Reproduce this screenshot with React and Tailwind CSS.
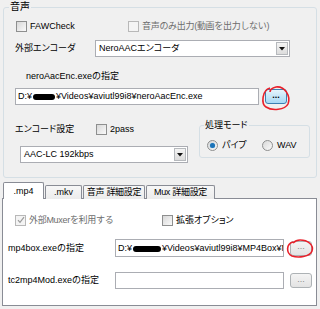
import React from "react";

const FONT = { fontFamily: '"Liberation Sans", "Noto Sans CJK JP", sans-serif' };

function Check({ checked, disabled }) {
  return (
    <span
      className={
        disabled
          ? "w-[11px] h-[11px] shrink-0 border border-[#b8b8b8] bg-[#f4f4f4] flex items-center justify-center"
          : "w-[11px] h-[11px] shrink-0 border border-[#8e8f8f] bg-gradient-to-br from-[#d8d8d8] to-[#fafafa] flex items-center justify-center"
      }
    >
      {checked ? (
        <svg width="8" height="8" viewBox="0 0 8 8">
          <path d="M1 4.2 L3 6.4 L7 1.2" stroke="#9a9a9a" strokeWidth="1.2" fill="none" />
        </svg>
      ) : null}
    </span>
  );
}

function Radio({ checked }) {
  return (
    <span className="w-[11px] h-[11px] shrink-0 rounded-full border border-[#8e8f8f] bg-gradient-to-br from-[#d8d8d8] to-[#fafafa] flex items-center justify-center">
      {checked ? <span className="w-[5px] h-[5px] rounded-full bg-[#1b73b8] shadow-[0_0_1px_#5fb0e8]" /> : null}
    </span>
  );
}

function Combo({ children, w }) {
  return (
    <div className={`${w} h-[17px] border border-[#abadb3] bg-white flex items-center`}>
      <div className="flex-1 pl-[3px] text-[9px] text-black leading-none whitespace-nowrap overflow-hidden [font-feature-settings:'palt']">{children}</div>
      <div className="w-[12px] h-[13px] mr-[1px] border border-[#b6b9bd] bg-gradient-to-b from-[#f4f4f4] to-[#dcdcdc] flex items-center justify-center">
        <svg width="6" height="4" viewBox="0 0 6 4">
          <path d="M0 0 H6 L3 3.5 Z" fill="#111" />
        </svg>
      </div>
    </div>
  );
}

function Blob({ w }) {
  return <span className={`inline-block ${w} h-[6px] bg-black rounded-[3px] align-middle mx-[1px]`} />;
}

function Btn({ active }) {
  return (
    <div
      className={
        active
          ? "w-[22px] h-[15px] rounded-[3px] border border-[#3c7fb1] bg-gradient-to-b from-[#e5f4fc] to-[#a7d9f5] flex items-center justify-center text-[9px] leading-none text-black font-bold"
          : "w-[22px] h-[15px] rounded-[3px] border border-[#adb2b5] bg-gradient-to-b from-[#f4f4f4] to-[#e3e3e3] flex items-center justify-center text-[9px] leading-none text-[#8a8a8a]"
      }
    >
      <span className="-mt-[3px]">...</span>
    </div>
  );
}

export default function App() {
  return (
    <div className="w-[320px] h-[309px] bg-[#f0f0f0] overflow-hidden relative text-black" style={FONT}>
      {/* Outer group */}
      <div className="mt-[7px] ml-[3px] w-[314px] h-[171px] border border-[#d5dfe5] rounded-[3px] relative">
        <span className="absolute -top-[7px] left-[5px] px-[1px] bg-[#f0f0f0] text-[10px] leading-[12px]">音声</span>

        {/* row 1 */}
        <div className="flex items-center h-[13px] mt-[12px] pl-[12px] text-[9px] leading-none">
          <div className="w-[112px] flex items-center gap-[3px]">
            <Check />
            <span>FAWCheck</span>
          </div>
          <div className="flex items-center gap-[3px]">
            <Check disabled />
            <span className="text-[#6d6d6d] tracking-[-0.3px]">音声のみ出力(動画を出力しない)</span>
          </div>
        </div>

        {/* row 2 */}
        <div className="flex items-center mt-[7px] pl-[11px] h-[17px]">
          <span className="w-[80px] text-[9px] leading-none [font-feature-settings:'palt']">外部エンコーダ</span>
          <Combo w="w-[195px]">NeroAACエンコーダ</Combo>
        </div>

        {/* row 3 */}
        <div className="mt-[13px] pl-[22px] h-[12px] text-[9px] leading-[12px]">neroAacEnc.exeの指定</div>

        {/* row 4 */}
        <div className="flex items-center mt-[6px] pl-[11px] gap-[6px]">
          <div className="w-[244px] h-[17px] border border-[#abadb3] bg-white pl-[2px] text-[9px] leading-[15px] whitespace-nowrap overflow-hidden">
            <span>D:¥<Blob w="w-[22px]" />¥Videos¥aviutl99i8¥neroAacEnc.exe</span>
          </div>
          <Btn active />
        </div>

        {/* row 5-6 */}
        <div className="flex mt-[17px]">
          <div className="flex flex-col pl-[11px]">
            <div className="flex items-center h-[14px] text-[9px] leading-none">
              <span className="w-[81px] [font-feature-settings:'palt']">エンコード設定</span>
              <div className="flex items-center gap-[3px]">
                <Check />
                <span>2pass</span>
              </div>
            </div>
            <div className="mt-[10px] ml-[5px]">
              <Combo w="w-[168px]">AAC-LC 192kbps</Combo>
            </div>
          </div>
          <div className="ml-[11px] mt-[3px] w-[111px] h-[33px] border border-[#d5dfe5] rounded-[3px] relative">
            <span className="absolute -top-[7px] left-[4px] px-[1px] bg-[#f0f0f0] text-[9px] leading-[12px] [font-feature-settings:'palt']">処理モード</span>
            <div className="flex items-center mt-[14px] pl-[7px] text-[9px] leading-none">
              <div className="w-[55px] flex items-center gap-[4px]">
                <Radio checked />
                <span className="[font-feature-settings:'palt']">パイプ</span>
              </div>
              <div className="flex items-center gap-[4px]">
                <Radio />
                <span>WAV</span>
              </div>
            </div>
          </div>
        </div>
      </div>

      {/* Tabs */}
      <div className="mt-[4px] ml-[3px] flex items-end h-[17px] text-[9px] leading-none relative z-10">
        <div className="h-[17px] w-[41px] border border-b-0 border-[#898c95] bg-white rounded-t-[2px] flex items-center justify-center">.mp4</div>
        <div className="h-[14px] w-[37px] ml-[1px] border border-b-0 border-[#898c95] bg-gradient-to-b from-[#f7f7f7] to-[#ececec] rounded-t-[2px] flex items-center justify-center">.mkv</div>
        <div className="h-[14px] w-[62px] ml-[1px] border border-b-0 border-[#898c95] bg-gradient-to-b from-[#f7f7f7] to-[#ececec] rounded-t-[2px] flex items-center justify-center tracking-[-0.3px]">音声 詳細設定</div>
        <div className="h-[14px] w-[69px] ml-[1px] border border-b-0 border-[#898c95] bg-gradient-to-b from-[#f7f7f7] to-[#ececec] rounded-t-[2px] flex items-center justify-center tracking-[-0.3px]">Mux 詳細設定</div>
      </div>
      <div className="ml-[2px] w-[315px] h-[108px] border border-[#898c95] bg-white -mt-[1px] text-[9px] leading-none">
        <div className="flex items-center mt-[15px] pl-[12px] h-[12px]">
          <div className="w-[147px] flex items-center gap-[3px]">
            <Check checked disabled />
            <span className="text-[#6d6d6d] tracking-[-0.3px]">外部Muxerを利用する</span>
          </div>
          <div className="flex items-center gap-[3px]">
            <Check />
            <span className="[font-feature-settings:'palt']">拡張オプション</span>
          </div>
        </div>

        <div className="flex items-center mt-[13px] pl-[5px] h-[18px]">
          <span className="w-[107px]">mp4box.exeの指定</span>
          <div className="w-[169px] h-[18px] border border-[#abadb3] bg-white pl-[2px] leading-[16px] whitespace-nowrap overflow-hidden">
            <span>D:¥<Blob w="w-[28px]" />¥Videos¥aviutl99i8¥MP4Box¥MP4Box.exe</span>
          </div>
          <div className="ml-[6px]"><Btn /></div>
        </div>

        <div className="flex items-center mt-[15px] pl-[5px] h-[17px]">
          <span className="w-[107px]">tc2mp4Mod.exeの指定</span>
          <div className="w-[169px] h-[17px] border border-[#abadb3] bg-white" />
          <div className="ml-[6px]"><Btn /></div>
        </div>
      </div>

      {/* red hand-drawn circles */}
      <svg className="absolute left-0 top-0 pointer-events-none" width="320" height="309">
        <path d="M270 88 C262 90 261 104 266 107 C272 111 285 110 288 104 C291 96 285 86 276 87 C272 88 270 90 270 92" stroke="#e8202a" strokeWidth="1.6" fill="none" />
        <path d="M293 242 C286 244 286 253 292 256 C298 258 310 257 312 251 C314 245 308 240 300 240 C296 240 294 242 293 243" stroke="#e8202a" strokeWidth="1.6" fill="none" />
      </svg>
    </div>
  );
}
